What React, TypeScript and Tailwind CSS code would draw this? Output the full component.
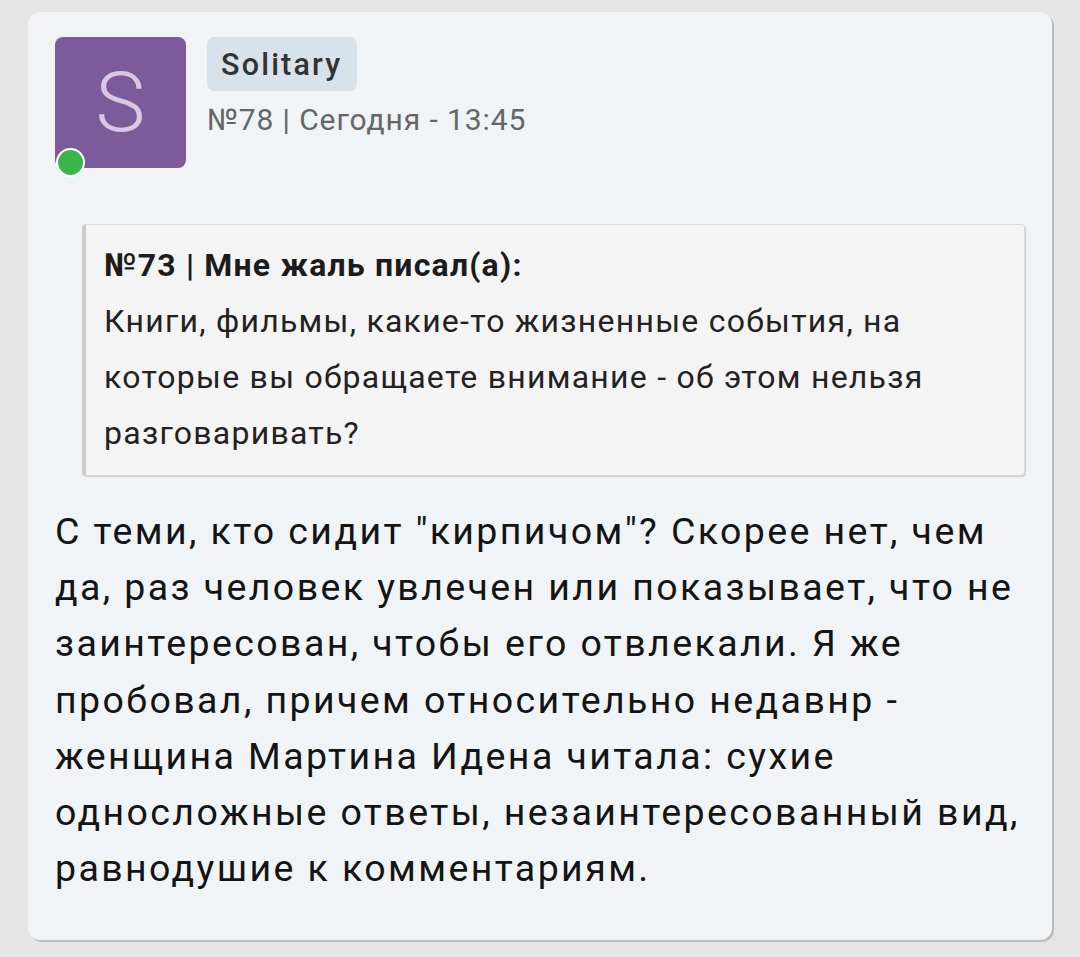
import React from "react";

export default function App() {
  return (
    <div
      className="min-h-[957px] w-full bg-[#e6e6e6] pt-[12px] pl-[28px] pr-[28px]"
      style={{ fontFamily: "Roboto, 'Noto Sans', sans-serif" }}
    >
      <div className="w-[1024px] rounded-[12px] bg-[#f0f4f7] px-[27px] pt-[25px] pb-[44px] shadow-[2px_2px_0_#bdbdbd]">
        <div className="flex items-start">
          <div className="relative h-[131px] w-[131px] shrink-0">
            <div className="flex h-[131px] w-[131px] items-center justify-center rounded-[8px] bg-[#7d5a99]">
              <span className="text-[84px] leading-none font-light text-[#d9c8e3]">S</span>
            </div>
            <div className="absolute left-[1px] top-[111px] h-[29px] w-[29px] rounded-full border-2 border-white bg-[#3bb54a]" />
          </div>
          <div className="ml-[21px] flex flex-col items-start">
            <div className="rounded-[7px] bg-[#d8e2ea] px-[14px] pt-[8px] pb-[6px] text-[30.5px] leading-[40px] font-medium tracking-[2.2px] text-[#333333]">
              Solitary
            </div>
            <div className="mt-[9px] text-[30px] leading-[40px] tracking-[0.9px] text-[#666666]">
              №78 | Сегодня - 13:45
            </div>
          </div>
        </div>

        <div className="mt-[56px] ml-[27px] rounded-[4px] border border-[#dadada] border-l-[4px] border-l-[#cccccc] bg-[#f4f4f4] pl-[18px] pr-[20px] pt-[12px] pb-[14px] shadow-[1px_1px_1px_rgba(0,0,0,0.15)]">
          <div className="text-[32px] leading-[56px] font-bold tracking-[1.2px] text-[#1c1c1c]">№73 | Мне жаль писал(а):</div>
          <div className="text-[32px] leading-[56px] tracking-[1.25px] text-[#222222]">
            Книги, фильмы, какие-то жизненные события, на которые вы обращаете внимание - об этом нельзя разговаривать?
          </div>
        </div>

        <div className="mt-[27px] mr-[-8px] text-[37.5px] leading-[56.2px] tracking-[2.4px] text-[#141414]">
          С теми, кто сидит "кирпичом"? Скорее нет, чем да, раз человек увлечен или показывает, что не заинтересован, чтобы его отвлекали. Я же пробовал, причем относительно недавнр - женщина Мартина Идена читала: сухие односложные ответы, незаинтересованный вид, равнодушие к комментариям.
        </div>
      </div>
    </div>
  );
}
